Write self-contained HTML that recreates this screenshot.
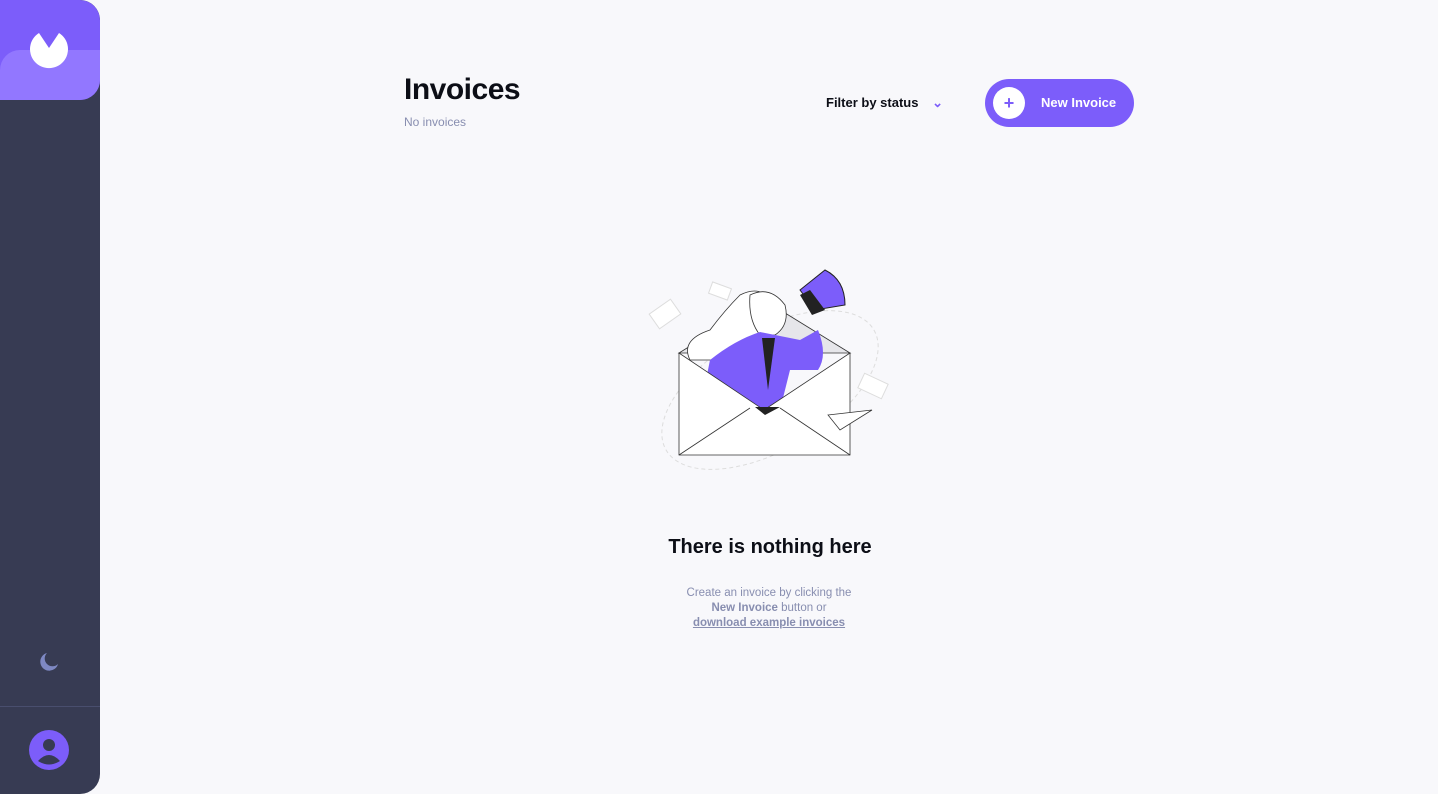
<!DOCTYPE html>
<html><head><meta charset="utf-8"><style>
*{margin:0;padding:0;box-sizing:border-box}
body{width:1438px;height:794px;background:#F8F8FB;font-family:"Liberation Sans",sans-serif;position:relative;overflow:hidden}
.side{position:absolute;left:0;top:0;width:100px;height:794px;background:#373B53;border-radius:0 20px 20px 0;overflow:hidden}
.logo{position:absolute;left:0;top:0;width:100px;height:100px;background:#7C5DFA;border-radius:0 20px 20px 0;overflow:hidden}
.logo .lo{position:absolute;left:0;top:50px;width:100px;height:50px;background:#9277FF;border-radius:20px 0 0 0}
.div{position:absolute;left:0;top:706px;width:100px;height:1px;background:#494E6E}
h1{position:absolute;left:404px;top:73px;font-size:30px;font-weight:bold;color:#0C0E16;letter-spacing:-0.5px}
.sub{position:absolute;left:404px;top:115px;font-size:12px;color:#888EB0}
.filter{position:absolute;left:826px;top:95px;font-size:13px;font-weight:bold;color:#0C0E16}
.btn{position:absolute;left:985px;top:79px;width:149px;height:48px;border-radius:24px;background:#7C5DFA;color:#fff;font-size:13px;font-weight:bold}
.btn .c{position:absolute;left:8px;top:8px;width:32px;height:32px;border-radius:50%;background:#fff;color:#7C5DFA;text-align:center;line-height:32px;font-size:18px}
.btn span{position:absolute;left:56px;top:16px}
.t{position:absolute;left:0;width:1538px;text-align:center}
</style></head><body>
<div class="side">
 <div class="logo"><div class="lo"></div>
  <svg style="position:absolute;left:29px;top:30px" width="40" height="40" viewBox="0 0 40 40"><path d="M10 3 L20 18 L30 3 A19 19 0 1 1 10 3Z" fill="#fff"/></svg>
 </div>
 <svg style="position:absolute;left:39px;top:652px" width="20" height="20" viewBox="0 0 20 20"><path d="M8 1 A9 9 0 1 0 19 12 A7 7 0 0 1 8 1Z" fill="#7E88C3"/></svg>
 <div class="div"></div>
 <svg style="position:absolute;left:29px;top:730px" width="40" height="40" viewBox="0 0 40 40"><circle cx="20" cy="20" r="20" fill="#7C5DFA"/><circle cx="20" cy="15" r="6" fill="#373B53"/><path d="M9 31 Q20 19 31 31 Q20 38 9 31Z" fill="#373B53"/></svg>
</div>
<h1>Invoices</h1>
<div class="sub">No invoices</div>
<div class="filter">Filter by status <span style="color:#7C5DFA;margin-left:10px">&#8964;</span></div>
<div class="btn"><div class="c">+</div><span>New Invoice</span></div>

<svg style="position:absolute;left:640px;top:260px" width="260" height="220" viewBox="0 0 260 220">
 <ellipse cx="130" cy="130" rx="120" ry="60" transform="rotate(-30 130 130)" fill="none" stroke="#ddd" stroke-dasharray="4 3"/>
 <rect x="12" y="45" width="26" height="18" transform="rotate(-35 25 54)" fill="#fff" stroke="#ddd"/>
 <rect x="70" y="25" width="20" height="12" transform="rotate(20 80 31)" fill="#fff" stroke="#ddd"/>
 <rect x="220" y="118" width="26" height="16" transform="rotate(25 233 126)" fill="#fff" stroke="#ddd"/>
 <path d="M39 93 L210 93 L124 40 Z" fill="#e6e6ea" stroke="#333" stroke-width="0.8"/>
 <path d="M70 70 Q40 80 50 100 L110 100 L130 40 Q120 25 100 35 Q85 50 70 70Z" fill="#fff" stroke="#333" stroke-width="0.8"/>
 <path d="M110 35 Q130 25 145 45 Q150 65 135 75 L120 75 Q108 60 110 35Z" fill="#fff" stroke="#333" stroke-width="0.8"/>
 <path d="M70 100 Q95 80 120 72 L160 80 L178 70 Q188 95 178 110 L150 110 L140 150 L100 150 L80 155 L65 125 Z" fill="#7C5DFA"/>
 <path d="M122 78 L135 78 L128 130Z" fill="#222"/>
 <path d="M160 30 L185 10 Q205 20 205 45 L175 50Z" fill="#7C5DFA" stroke="#222" stroke-width="1"/>
 <path d="M160 35 L172 55 L185 50 L170 30Z" fill="#222"/>
 <path d="M39 93 L39 195 L210 195 L210 93 L124 150 Z" fill="#fff" stroke="#333" stroke-width="0.8"/>
 <path d="M39 195 L110 148 M210 195 L140 148" stroke="#333" stroke-width="0.8" fill="none"/>
 <path d="M115 147 L140 147 L125 155Z" fill="#222"/>
 <path d="M188 155 L232 150 L200 170Z" fill="#fff" stroke="#333" stroke-width="0.8"/>
</svg>

<div class="t" style="top:536px;font-size:20px;font-weight:bold;color:#0C0E16;left:0;width:1540px">There is nothing here</div>
<div class="t" style="top:586px;font-size:11.5px;line-height:15px;color:#888EB0">Create an invoice by clicking the<br><b>New Invoice</b> button or<br><b style="text-decoration:underline">download example invoices</b></div>
</body></html>
